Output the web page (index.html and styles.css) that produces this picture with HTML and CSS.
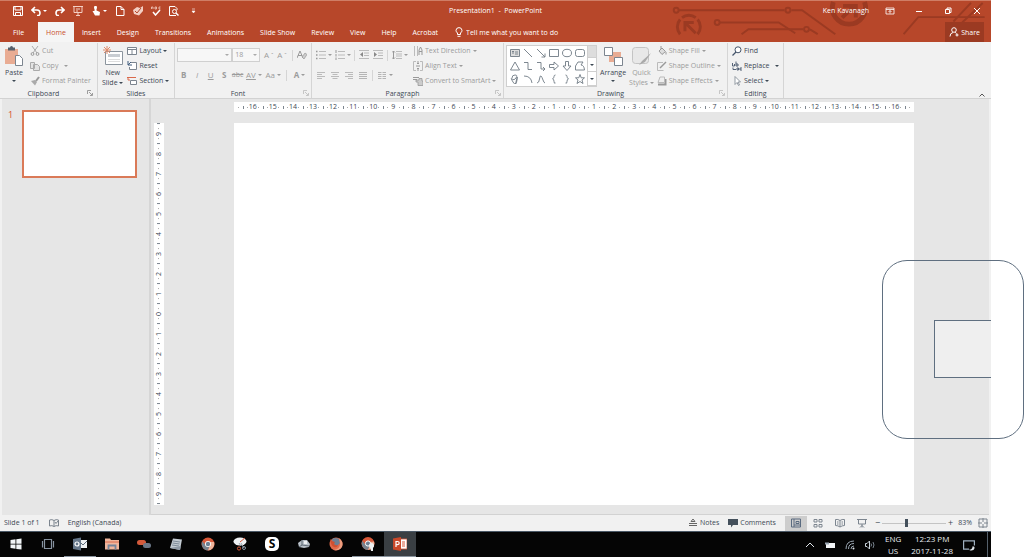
FILE: index.html
```html
<!DOCTYPE html>
<html lang="en">
<head>
  <meta charset="UTF-8" />
  <meta name="viewport" content="width=device-width, initial-scale=1" />
  <title>Presentation1 - PowerPoint</title>
  <link rel="stylesheet" href="styles.css">
</head>
<body>

<div class="window">

  <header class="header">
    <svg class="circuit" viewBox="0 0 370 42" aria-hidden="true">
      <g fill="none" stroke="#9b3a22" stroke-width="2">
        <circle cx="52" cy="9.500" r="2.500"/>
        <path d="M55 9.500H163M170 9.500H181L215 34"/>
        <circle cx="166.500" cy="9.500" r="2.500"/>
        <circle cx="94" cy="22" r="2.500"/>
        <path d="M97 22H157L174 33"/>
        <path d="M119 34L126 29H182M189 29L197 34"/>
        <circle cx="185.500" cy="29" r="2.500"/>
        <path d="M285 34L300 16.500H368M336 21L354 2M345 22L366 2"/>
        <path d="M56 34A11.500 11.500 0 0 1 56 19M58 17A11.500 11.500 0 0 1 72 17M74 19A11.500 11.500 0 0 1 74 34" stroke-width="3"/>
        <path d="M61 31V22H70M62 23L72 33" stroke-width="3"/>
        <path d="M213 1A17 17 0 1 0 245 1" stroke-width="5"/>
        <path d="M222 17L235 5M223 5H236V17" stroke-width="4"/>
      </g>
    </svg>

    <div class="titlebar">
      <div class="quick">
        <button aria-label="Save"><svg viewBox="0 0 10 10"><path d="M.500 .500h9v9h-9zM2 1v3h6V1M2.500 9.500V6.500h5v3" fill="none" stroke="#fff"/></svg></button>
        <button aria-label="Undo"><svg viewBox="0 0 10 10"><path d="M4 1L1 4l3 3M1 4h5q3 0 3 3t-3 2.500" fill="none" stroke="#fff" stroke-width="1.600"/></svg><i class="caret"></i></button>
        <button aria-label="Redo"><svg viewBox="0 0 10 10"><path d="M6 1l3 3-3 3M9 4H4Q1 4 1 7t3 2.500" fill="none" stroke="#fff" stroke-width="1.600"/></svg></button>
        <button aria-label="Start From Beginning"><svg viewBox="0 0 10 10"><path d="M0 .500h10M1 1v5.500h8V1M5 6.500V9M3 9.500h4M3 3h4M3 5h2" fill="none" stroke="#f3cfc4"/></svg></button>
        <button aria-label="Touch Mode"><svg viewBox="0 0 10 10"><path d="M3.500 0v5L1.500 5 4 9.500h4.500L9 6 5.500 4.500V0z" fill="#fff"/><circle cx="4.500" cy="1.500" r="1.500" fill="#fff"/></svg><i class="caret"></i></button>
        <button aria-label="New"><svg viewBox="0 0 10 10"><path d="M1.500 .500h4.500l3 3v6h-7.500zM6 .500v3h3" fill="none" stroke="#fff"/></svg></button>
        <button aria-label="Format"><svg viewBox="0 0 10 10"><path d="M0 4l4-3 3 1 3-2v5L6 9.500 1 8z" fill="#f3cfc4"/><path d="M2 5l2 2 4-5" fill="none" stroke="#b7472a"/></svg></button>
        <button aria-label="Spelling"><svg viewBox="0 0 10 10"><path d="M2 6l2.500 3L9 4" fill="none" stroke="#fff" stroke-width="1.500"/><path d="M.500 3V1h1.500v2M4 1v2h1.500V1zM9.500 1H8v2h1.500" fill="none" stroke="#f3cfc4" stroke-width=".8"/></svg></button>
        <button aria-label="Print Preview"><svg viewBox="0 0 10 10"><path d="M7 9.500H.500v-9H6l2 2V4" fill="none" stroke="#fff"/><circle cx="5.500" cy="5.500" r="2" fill="none" stroke="#fff"/><path d="M7 7l2.500 2.500" stroke="#fff" stroke-width="1.500"/></svg></button>
        <button aria-label="Customize Quick Access Toolbar"><svg viewBox="0 0 10 10"><path d="M5 3h3M5 5h3L6.500 7z" stroke="#fff" fill="#fff" stroke-width=".6"/></svg></button>
      </div>
      <div class="title">Presentation1&nbsp; -&nbsp; PowerPoint</div>
      <div class="controls">
        <span class="user">Ken Kavanagh</span>
        <button aria-label="Ribbon Display Options"><svg viewBox="0 0 10 10"><path d="M1 2h8v6H1zM1 3.500h8M5 7.500v-3M3.500 6L5 4.500 6.500 6" fill="none" stroke="#fff" stroke-width=".8"/></svg></button>
        <button aria-label="Minimize"><svg viewBox="0 0 10 10"><path d="M2 5.500h6" stroke="#fff"/></svg></button>
        <button aria-label="Restore Down"><svg viewBox="0 0 10 10"><path d="M2.500 3.500h4v4h-4zM4 3.500v-1.500h4v4.500H6.500" fill="none" stroke="#fff"/></svg></button>
        <button aria-label="Close"><svg viewBox="0 0 10 10"><path d="M2 2l6 6M8 2L2 8" stroke="#fff"/></svg></button>
      </div>
    </div>

    <nav class="tabs">
      <a href="#" class="file">File</a>
      <a href="#" class="active">Home</a>
      <a href="#">Insert</a>
      <a href="#">Design</a>
      <a href="#">Transitions</a>
      <a href="#">Animations</a>
      <a href="#">Slide Show</a>
      <a href="#">Review</a>
      <a href="#">View</a>
      <a href="#">Help</a>
      <a href="#">Acrobat</a>
      <label class="tell">
        <svg viewBox="0 0 10 10"><path d="M3.500 7.500V6Q2 5 2 3.300 2.200 .700 5 .600 7.800 .700 8 3.300 8 5 6.500 6V7.500zM3.500 9.300h3" fill="none" stroke="#fff"/></svg>
        <input type="text" placeholder="Tell me what you want to do">
      </label>
      <button class="share">
        <svg viewBox="0 0 10 10"><circle cx="5" cy="3" r="2.300" fill="none" stroke="#fff"/><path d="M1 9.500Q1 6 4 5.500M6 5.500q1 0 1.500 1M8 6.500v3M6.500 8h3" fill="none" stroke="#fff"/></svg>
        Share
      </button>
    </nav>
  </header>

  <section class="ribbon">
    <div class="group g-clipboard">
      <div class="group-body">
        <button class="big">
          <svg viewBox="0 0 20 20"><path d="M1 3h13v15H1z" fill="#e9ac93"/><path d="M4 1.500h7v3H4z" fill="#56606b"/><circle cx="7.500" cy="1.500" r="1.500" fill="#56606b"/><path d="M11.500 9.500h4l3 3v7h-7z" fill="#fff" stroke="#7c858f"/></svg>
          <span>Paste</span><i class="caret"></i>
        </button>
        <div class="rows off">
          <button><svg viewBox="0 0 10 10"><path d="M2 0l5 7M8 0L3 7" stroke="#aaa"/><circle cx="2.500" cy="8" r="1.400" fill="none" stroke="#999"/><circle cx="7.500" cy="8" r="1.400" fill="none" stroke="#999"/></svg>Cut</button>
          <button><svg viewBox="0 0 10 10"><path d="M.500 1.500h4v6h-4zM3.500 3.500h4l2 2v4h-6z" fill="#e3e3e3" stroke="#aaa"/></svg>Copy &nbsp;<i class="caret"></i></button>
          <button><svg viewBox="0 0 10 10"><path d="M1 5l4-1 2 2-2 3.500z" fill="#aaa"/><path d="M6 5l3-4" stroke="#999" stroke-width="2"/></svg>Format Painter</button>
        </div>
      </div>
      <div class="group-name with-launch">Clipboard<button class="launch" aria-label="Clipboard options"><svg viewBox="0 0 6 6"><path d="M.500 4V.500H4M2 2l3 3M5.500 3v2.500H3" fill="none" stroke="#888" stroke-width=".8"/></svg></button></div>
    </div>

    <div class="group g-slides">
      <div class="group-body">
        <button class="big">
          <svg viewBox="0 0 20 20"><path d="M2.500 5.500h17v13h-17z" fill="#fff" stroke="#8b949d"/><path d="M5 8h12v3H5z" fill="#c9cdd2"/><path d="M5 13.500h12M5 15.500h12" stroke="#ddd"/><path d="M4 0v8M0 4h8M1 1l6 6M7 1L1 7" stroke="#e08b6b"/></svg>
          <span>New<br>Slide <i class="caret"></i></span>
        </button>
        <div class="rows">
          <button><svg viewBox="0 0 10 10"><path d="M.500 1.500h9v7h-9zM.500 3.500h9M5 4v4" fill="#fff" stroke="#7c858f"/></svg>Layout <i class="caret"></i></button>
          <button><svg viewBox="0 0 10 10"><path d="M3 1.500h6.500v7H2.500V6" fill="#fff" stroke="#7c858f"/><path d="M1 0v4h4M1 4l3-3" fill="none" stroke="#3f5b7c"/></svg>Reset</button>
          <button><svg viewBox="0 0 10 10"><path d="M0 1.500h9M1 1v3" stroke="#d9694a" fill="none"/><path d="M3.500 4.500h6v4h-6z" fill="#fff" stroke="#7c858f"/><path d="M1 4h2" stroke="#d9694a"/></svg>Section <i class="caret"></i></button>
        </div>
      </div>
      <div class="group-name">Slides</div>
    </div>

    <div class="group g-font">
      <div class="group-body lines off">
        <div class="line">
          <span class="combo font-name"><select aria-label="Font"><option></option></select></span><span class="combo font-size"><select aria-label="Font Size"><option>18</option></select></span>
          <button class="glyph" aria-label="Increase Font Size">A<sup>ˆ</sup></button>
          <button class="glyph" aria-label="Decrease Font Size">A<sup>ˇ</sup></button>
          <i class="bar"></i>
          <button class="glyph" aria-label="Clear Formatting"><svg viewBox="0 0 10 10"><path d="M0 8L3 1l3 7M1 5.500h4" fill="none" stroke="#999"/><path d="M5 7l3-4 2 1.500L7 9z" fill="#ccc" stroke="#999" stroke-width=".7"/></svg></button>
        </div>
        <div class="line">
          <button class="glyph"><b>B</b></button>
          <button class="glyph"><em>I</em></button>
          <button class="glyph"><u>U</u></button>
          <button class="glyph"><b>S</b></button>
          <button class="glyph small"><s>abc</s></button>
          <button class="glyph wide"><u>AV</u><i class="caret"></i></button>
          <button class="glyph wide">Aa<i class="caret"></i></button>
          <i class="bar"></i>
          <button class="glyph wide"><b>A</b><i class="caret"></i></button>
        </div>
      </div>
      <div class="group-name with-launch">Font<button class="launch" aria-label="Font options"><svg viewBox="0 0 6 6"><path d="M.500 4V.500H4M2 2l3 3M5.500 3v2.500H3" fill="none" stroke="#bbb" stroke-width=".8"/></svg></button></div>
    </div>

    <div class="group g-paragraph">
      <div class="group-body off">
        <div class="lines">
          <div class="line">
            <button class="glyph wide" aria-label="Bullets"><svg viewBox="0 0 10 10"><path d="M0 1.500h1.500M0 5h1.500M0 8.500h1.500" stroke="#999" stroke-width="1.500"/><path d="M3 1.500h7M3 5h7M3 8.500h7" stroke="#bbb"/></svg><i class="caret"></i></button>
            <button class="glyph wide" aria-label="Numbering"><svg viewBox="0 0 10 10"><path d="M1 0v3M1 4v2.500M1 7.500V10" stroke="#999"/><path d="M3 1.500h7M3 5h7M3 8.500h7" stroke="#bbb"/></svg><i class="caret"></i></button>
            <i class="bar"></i>
            <button class="glyph" aria-label="Decrease List Level"><svg viewBox="0 0 10 10"><path d="M0 .500h10M5 3h5M5 5.500h5M0 8.500h10" stroke="#bbb"/><path d="M4 2L1 4.500 4 7z" fill="#888"/></svg></button>
            <button class="glyph" aria-label="Increase List Level"><svg viewBox="0 0 10 10"><path d="M0 .500h10M5 3h5M5 5.500h5M0 8.500h10" stroke="#bbb"/><path d="M1 2l3 2.500L1 7z" fill="#888"/></svg></button>
            <i class="bar"></i>
            <button class="glyph wide" aria-label="Line Spacing"><svg viewBox="0 0 10 10"><path d="M1.500 1v8M0 2.500L1.500 1 3 2.500M0 7.500L1.500 9 3 7.500" fill="none" stroke="#999"/><path d="M4 1.500h6M4 4h6M4 6h6M4 8.500h6" stroke="#bbb"/></svg><i class="caret"></i></button>
          </div>
          <div class="line">
            <button class="glyph" aria-label="Align Left"><svg viewBox="0 0 10 10"><path d="M1 2.500h8M1 4.500h5M1 6.500h8M1 8.500h5" stroke="#bbb"/></svg></button>
            <button class="glyph" aria-label="Center"><svg viewBox="0 0 10 10"><path d="M1 2.500h8M2.500 4.500h5M1 6.500h8M2.500 8.500h5" stroke="#bbb"/></svg></button>
            <button class="glyph" aria-label="Align Right"><svg viewBox="0 0 10 10"><path d="M1 2.500h8M4 4.500h5M1 6.500h8M4 8.500h5" stroke="#bbb"/></svg></button>
            <button class="glyph" aria-label="Justify"><svg viewBox="0 0 10 10"><path d="M1 2.500h8M1 4.500h8M1 6.500h8M1 8.500h8" stroke="#b5b5b5"/></svg></button>
            <i class="bar"></i>
            <button class="glyph wide" aria-label="Columns"><svg viewBox="0 0 10 10"><path d="M1 2.500h3.500M1 4.500h3.500M1 6.500h3.500M1 8.500h3.500M5.500 2.500H9M5.500 4.500H9M5.500 6.500H9M5.500 8.500H9" stroke="#b5b5b5"/></svg><i class="caret"></i></button>
          </div>
        </div>
        <div class="rows">
          <button><svg viewBox="0 0 10 10"><path d="M1.500 0v10M4.500 0v10" stroke="#bbb"/><path d="M6 9V4l1.500-3L9 4v5M6 5.500h3" fill="none" stroke="#999"/></svg>Text Direction <i class="caret"></i></button>
          <button><svg viewBox="0 0 10 10"><path d="M3 .500H.500v9H3M7 .500h2.500v9H7" fill="none" stroke="#bbb"/><path d="M5 0v3M5 7v3M3 5h4M4 2l1 1 1-1M4 8l1-1 1 1" fill="none" stroke="#999"/></svg>Align Text <i class="caret"></i></button>
          <button><svg viewBox="0 0 10 10"><path d="M0 1.500h6M0 3.500h4" stroke="#999"/><path d="M3 4h3v-1.500h3V5h1v4.500H5V6H3z" fill="#ccc" stroke="#999" stroke-width=".8"/></svg>Convert to SmartArt <i class="caret"></i></button>
        </div>
      </div>
      <div class="group-name with-launch">Paragraph<button class="launch" aria-label="Paragraph options"><svg viewBox="0 0 6 6"><path d="M.500 4V.500H4M2 2l3 3M5.500 3v2.500H3" fill="none" stroke="#bbb" stroke-width=".8"/></svg></button></div>
    </div>

    <div class="group g-drawing">
      <div class="group-body">
        <div class="gallery">
          <div class="shapes">
            <button aria-label="Text Box"><svg viewBox="0 0 10 10"><path d="M.500 1.500h9v7h-9z" fill="#ddd"/><path d="M2 3.500h2M3 3.500V6M5 4h3M5 6h3" /></svg></button>
            <button aria-label="Line"><svg viewBox="0 0 10 10"><path d="M1 1l8 8"/></svg></button>
            <button aria-label="Arrow"><svg viewBox="0 0 10 10"><path d="M1 1l8 8M9 5.500V9H5.500"/></svg></button>
            <button aria-label="Rectangle"><svg viewBox="0 0 10 10"><path d="M.500 1.500h9v7h-9z"/></svg></button>
            <button aria-label="Oval"><svg viewBox="0 0 10 10"><ellipse cx="5" cy="5" rx="4.500" ry="3.700"/></svg></button>
            <button aria-label="Rounded Rectangle"><svg viewBox="0 0 10 10"><rect x=".5" y="1.500" width="9" height="7" rx="2"/></svg></button>
            <button aria-label="Triangle"><svg viewBox="0 0 10 10"><path d="M5 1l4.500 8h-9z"/></svg></button>
            <button aria-label="Elbow Connector"><svg viewBox="0 0 10 10"><path d="M1 1.500h4v7h4"/></svg></button>
            <button aria-label="Elbow Arrow"><svg viewBox="0 0 10 10"><path d="M1 1.500h4v6.500h4M7 6l2 2-2 2"/></svg></button>
            <button aria-label="Right Arrow"><svg viewBox="0 0 10 10"><path d="M.500 3.500H5V1l4.500 4L5 9V6.500H.500z"/></svg></button>
            <button aria-label="Down Arrow"><svg viewBox="0 0 10 10"><path d="M3.500 .500V5H1l4 4.500L9 5H6.500V.500z"/></svg></button>
            <button aria-label="Freeform"><svg viewBox="0 0 10 10"><path d="M3 1h5L6 4q3 0 3.500 5h-9V5z"/></svg></button>
            <button aria-label="Scribble"><svg viewBox="0 0 10 10"><path d="M2 4q0-3 3-3t1 3-4 1 1 3 4-2-1 2-1 2"/></svg></button>
            <button aria-label="Arc"><svg viewBox="0 0 10 10"><path d="M1 2q7 0 8 7"/></svg></button>
            <button aria-label="Curve"><svg viewBox="0 0 10 10"><path d="M1 9Q3 9 3.500 5T5 2t2 4 2 3"/></svg></button>
            <button aria-label="Left Brace"><svg viewBox="0 0 10 10"><path d="M6.500 1Q5 1 5 2.500T3.500 5Q5 5 5 7.500T6.500 9"/></svg></button>
            <button aria-label="Right Brace"><svg viewBox="0 0 10 10"><path d="M3.500 1Q5 1 5 2.500T6.500 5Q5 5 5 7.500T3.500 9"/></svg></button>
            <button aria-label="Star"><svg viewBox="0 0 10 10"><path d="M5 .500l1.200 3.300h3.300L7 6l1 3.500-3-2-3 2L3 6 .500 3.800h3.300z"/></svg></button>
          </div>
          <div class="scroll">
            <button aria-label="Scroll Up" disabled></button>
            <button aria-label="Scroll Down"><i class="caret"></i></button>
            <button aria-label="More Shapes"><i class="caret"></i></button>
          </div>
        </div>
        <button class="big">
          <svg viewBox="0 0 20 20"><path d="M6 6h12v10H6z" fill="#e9ac93"/><path d="M1.500 1.500h8v8h-8zM11.500 11.500h8v8h-8z" fill="#fff" stroke="#7c858f"/></svg>
          <span>Arrange</span><i class="caret"></i>
        </button>
        <button class="big off">
          <svg viewBox="0 0 20 20"><rect x="1.500" y="1.500" width="16" height="16" rx="3" fill="#e8e8e8" stroke="#c4c4c4"/><path d="M8 19l3-4 9-8-6 9z" fill="#aaa"/></svg>
          <span>Quick<br>Styles <i class="caret"></i></span>
        </button>
        <div class="rows off">
          <button><svg viewBox="0 0 10 10"><path d="M2 5l3-3 3.500 3.500L5 8.500zM4 0v3" fill="#ddd" stroke="#999"/><path d="M9 6v2.500" stroke="#999"/></svg>Shape Fill <i class="caret"></i></button>
          <button><svg viewBox="0 0 10 10"><path d="M6 1.500H.500v8h6" fill="none" stroke="#bbb"/><path d="M3 7l6-6" stroke="#999" stroke-width="1.500"/></svg>Shape Outline <i class="caret"></i></button>
          <button><svg viewBox="0 0 10 10"><path d="M1 8.500h7.500V3" fill="none" stroke="#999" stroke-width="2"/><path d="M3 1h4.500v5.500H1z" fill="#eee" stroke="#bbb"/></svg>Shape Effects <i class="caret"></i></button>
        </div>
      </div>
      <div class="group-name with-launch">Drawing<button class="launch" aria-label="Drawing options"><svg viewBox="0 0 6 6"><path d="M.500 4V.500H4M2 2l3 3M5.500 3v2.500H3" fill="none" stroke="#bbb" stroke-width=".8"/></svg></button></div>
    </div>

    <div class="group g-editing">
      <div class="group-body">
        <div class="rows">
          <button><svg viewBox="0 0 10 10"><circle cx="6" cy="3.800" r="3" fill="#fff" stroke="#44546a"/><path d="M4 6L.500 9.500" stroke="#44546a" stroke-width="1.300"/></svg>Find</button>
          <button><svg viewBox="0 0 10 10"><path d="M.500 2v3h2V3M4 .500V5h2V3H4M1 6.500v2h3M5 7v2h1.500V7zM10 7H8v2h2" fill="none" stroke="#44546a" stroke-width=".9"/></svg>Replace &nbsp;<i class="caret"></i></button>
          <button><svg viewBox="0 0 10 10"><path d="M3 .500v8l2-2 1.500 3 1-.500L6 6h2.500z" fill="#fff" stroke="#7c858f" stroke-width=".8"/></svg>Select <i class="caret"></i></button>
        </div>
      </div>
      <div class="group-name">Editing</div>
    </div>
    <button class="collapse" aria-label="Collapse the Ribbon"><svg viewBox="0 0 6 6"><path d="M.500 4.500L3 2l2.500 2.500" fill="none" stroke="#555"/></svg></button>
  </section>

  <main class="workspace">
    <aside class="thumbs">
      <span class="thumb-no">1</span>
      <a href="#" class="thumb" aria-label="Slide 1"></a>
    </aside>
    <div class="editor">
      <div class="ruler across" id="ruler-x"></div>
      <div class="ruler down" id="ruler-y"></div>
      <div class="slide">
        <div class="shape-rounded"></div>
        <div class="shape-rect"></div>
      </div>
    </div>
  </main>

  <footer class="status">
    <span>Slide 1 of 1</span>
    <svg viewBox="0 0 10 10"><path d="M5 2.500Q3 1 .500 2v6Q3 7 5 8.500 7 7 9.500 8V2Q7 1 5 2.500v6" fill="none" stroke="#7c858f"/><path d="M6 4l1 1.500L9 3" fill="none" stroke="#7c858f"/></svg>
    <span>English (Canada)</span>
    <div class="status-right">
      <button><svg viewBox="0 0 10 10"><path d="M1 5.500h8M1 7.500h8M3 3.500h4L5 1z" fill="none" stroke="#666"/></svg>Notes</button>
      <button><svg viewBox="0 0 10 10"><path d="M0 1h10v6H5L3 9.500V7H0z" fill="#44505c"/></svg>Comments</button>
      <div class="views">
        <button class="on" aria-label="Normal"><svg viewBox="0 0 10 10"><path d="M.500 1h9v8h-9zM3 1v8M5 3.500h3v2H5zM3 7h6" fill="none" stroke="#5a6b80"/></svg></button>
        <button aria-label="Slide Sorter"><svg viewBox="0 0 10 10"><path d="M1 1.500h3v2.500H1zM6 1.500h3v2.500H6zM1 6.500h3V9H1zM6 6.500h3V9H6z" fill="none" stroke="#7c858f"/></svg></button>
        <button aria-label="Reading View"><svg viewBox="0 0 10 10"><path d="M5 2.500Q3 1 .500 1.500v6Q3 7.500 5 9 7 7.500 9.500 7.500v-6Q7 1 5 2.500V9M2 4h1.500M2 6h1.500M6.500 4H8M6.500 6H8" fill="none" stroke="#7c858f"/></svg></button>
        <button aria-label="Slide Show"><svg viewBox="0 0 10 10"><path d="M0 1.500h10M1.500 2v4h7V2M5 6v3.500M3 9.500l2-2 2 2" fill="none" stroke="#7c858f"/></svg></button>
      </div>
      <button class="step" aria-label="Zoom Out">−</button>
      <input class="zoom" type="range" min="0" max="100" value="38" aria-label="Zoom">
      <button class="step" aria-label="Zoom In">+</button>
      <span class="percent">83%</span>
      <button class="fit" aria-label="Fit slide to window"><svg viewBox="0 0 10 10"><path d="M1 1h8v8H1zM5 0v4M5 6v4M0 5h4M6 5h4" fill="none" stroke="#7c858f"/></svg></button>
    </div>
  </footer>

  <footer class="taskbar">
    <button aria-label="Start"><svg viewBox="0 0 14 14"><path d="M1.500 3L6.500 2.300V6.700H1.500zM7.300 2.200L12.500 1.500V6.700H7.300zM1.500 7.400H6.500V11.800L1.500 11zM7.300 7.400H12.500V12.600L7.300 11.900z" fill="#f2f5f7"/></svg></button>
    <button aria-label="Task View"><svg viewBox="0 0 14 14"><path d="M3.500 2.500h7v9h-7zM1.500 4v6.500M12.500 4v6.500" fill="none" stroke="#8793a0" stroke-width="1.200"/></svg></button>
    <button class="open" aria-label="Outlook"><svg viewBox="0 0 14 14"><path d="M6 3h8v8H6z" fill="#eef1f3"/><path d="M8 6l2 2 4-4" fill="none" stroke="#5d6c7b"/><path d="M0 2l8-1.500v13L0 12z" fill="#66778a"/><circle cx="4" cy="7" r="2" fill="none" stroke="#fff" stroke-width="1.200"/></svg></button>
    <button aria-label="File Explorer"><svg viewBox="0 0 14 14"><path d="M0 1.500h5l1 1.500h8v9.500H0z" fill="#efb59c"/><path d="M0 5h14" stroke="#d9694a"/><path d="M3.500 12.500v-4h7v4" fill="none" stroke="#73849a" stroke-width="1.800"/></svg></button>
    <button aria-label="Connect"><svg viewBox="0 0 14 14"><rect x="0" y="3" width="9" height="5" rx="2.500" fill="#d45a3b"/><rect x="6" y="6" width="8" height="5" rx="2.500" fill="#6a7787"/></svg></button>
    <button aria-label="Notepad"><svg viewBox="0 0 14 14"><path d="M4 1.500l9 1L11 13 1 11z" fill="#c3cbd2"/><path d="M4 4l7 1M3.500 6l7 1M3 8l7 1" stroke="#7e8b98"/><path d="M1 11l10 2 1-4" fill="#8e99a5"/></svg></button>
    <button aria-label="Chrome"><svg viewBox="0 0 14 14"><circle cx="7" cy="7" r="6.500" fill="#d9593a"/><path d="M1.200 4.500A6.500 6.500 0 0 0 7 13.500L9 8H5z" fill="#77828d"/><path d="M13 5A6.500 6.500 0 0 1 7 13.500L9.500 7 9 5z" fill="#efb59c"/><circle cx="7" cy="7" r="3" fill="#fff"/><circle cx="7" cy="7" r="2.200" fill="#6c7f93"/></svg></button>
    <button aria-label="Snipping Tool"><svg viewBox="0 0 14 14"><ellipse cx="7" cy="4.500" rx="6.500" ry="4" fill="#eef1f3"/><path d="M7 5l5-4" stroke="#d9593a"/><path d="M6 6l2 3M8 6l3 5" stroke="#9aa4ae"/><circle cx="6" cy="11.500" r="1.600" fill="none" stroke="#d9593a"/><circle cx="11" cy="11" r="1.500" fill="none" stroke="#8793a0"/></svg></button>
    <button aria-label="Skype" class="skype"><span>S</span></button>
    <button aria-label="Game"><svg viewBox="0 0 14 14"><path d="M1 6l4-3h5l3 4-1 3-5 1-5-1z" fill="#b9c1c9"/><path d="M5 3v5l-3 2M5 8l7 1" fill="none" stroke="#5f6a75"/><path d="M7 4h3v3H7z" fill="#eef1f3"/></svg></button>
    <button aria-label="Firefox"><svg viewBox="0 0 14 14"><circle cx="7" cy="7" r="6.500" fill="#e0694a"/><path d="M3 2q4-2 7 0l1 4-3 3-4-2z" fill="#6c7f93"/><path d="M10 1q5 4 3 9-3 4-8 3 6-1 6-6 0-3-1-6z" fill="#ee9d7e"/><path d="M1 2l2 2 3 1-1 2q2 2 4 1-1 3-4 2T1 2z" fill="#cf5031"/></svg></button>
    <button class="open" aria-label="Chrome Profile"><svg viewBox="0 0 14 14"><circle cx="7" cy="6.500" r="6.500" fill="#d9593a"/><path d="M1.200 4A6.500 6.500 0 0 0 7 13L9 8H5z" fill="#77828d"/><path d="M13 4.500A6.500 6.500 0 0 1 7 13L9.500 7 9 5z" fill="#efb59c"/><circle cx="7" cy="6.500" r="2.600" fill="#6c7f93" stroke="#fff"/><circle cx="10.500" cy="8.500" r="2.500" fill="#eef1f3"/><path d="M9 9h3v5H10z" fill="#eef1f3"/></svg></button>
    <button class="open current" aria-label="PowerPoint"><svg viewBox="0 0 14 14"><path d="M7 2h7v10H7z" fill="#fff" stroke="#d9593a" stroke-width=".8"/><path d="M9 5h3M9 7h3M9 9h3" stroke="#d9593a"/><path d="M0 1.500L8 0v14l-8-1.500z" fill="#c9482a"/><path d="M3 10V4.500h1.500q1.700 0 1.700 1.600T4.500 7.700H3" fill="none" stroke="#fff" stroke-width="1.200"/></svg></button>
    <div class="tray">
      <button aria-label="Show hidden icons"><svg viewBox="0 0 10 10"><path d="M1 7l4-4 4 4" fill="none" stroke="#dfe5ea"/></svg></button>
      <button aria-label="Battery"><svg viewBox="0 0 10 10"><path d="M1 3h9v5H1z" fill="#f2f5f7"/><path d="M0 2.500h4v2H0z" fill="#9aa6b2"/></svg></button>
      <button aria-label="Network"><svg viewBox="0 0 10 10"><path d="M1 9Q1 1 9 1M3.500 9q0-5.500 5.500-5.500M6 9q0-3 3-3" fill="none" stroke="#9aa6b2"/><circle cx="8.500" cy="8.500" r="1" fill="#dfe5ea"/></svg></button>
      <button aria-label="Volume"><svg viewBox="0 0 10 10"><path d="M.500 3.500H2L4.500 1v8L2 6.500H.500z" fill="none" stroke="#c9d2da"/><path d="M6 3.500q1 1.500 0 3M8 2q2 3 0 6" fill="none" stroke="#77828d"/></svg></button>
      <span class="lang">ENG<br>US</span>
      <span class="clock">12:23 PM<br>2017-11-28</span>
      <button class="notify" aria-label="Notifications"><svg viewBox="0 0 10 10"><path d="M5 8.500H.500v-7h9v4" fill="none" stroke="#9fb0c0"/><path d="M5 9q3-.500 3-3 2 0 1.500 2T6 9.500z" fill="#dfe5ea"/></svg></button>
    </div>
  </footer>
</div>

<script>
  // one cell per centimetre, counted outwards from the middle of the slide
  function drawRuler(id, max) {
    const ruler = document.getElementById(id);
    for (let n = -max - 1; n <= max + 1; n++) {
      const cell = document.createElement('span');
      cell.textContent = Math.abs(n) > max ? '' : Math.abs(n);
      ruler.appendChild(cell);
    }
  }
  drawRuler('ruler-x', 16);
  drawRuler('ruler-y', 9);
</script>

</body>
</html>
```
FILE: styles.css
```css
* {
  box-sizing: border-box;
}
body {
  margin: 0;
  padding-right: 33px;
  background: #fff;
  color: #3c4854;
  font-family: 'Open Sans', 'Noto Sans', sans-serif;
  font-size: 7px;
  line-height: 10px;
}
button, input, select {
  font: inherit;
  color: inherit;
  background: none;
  border: 0;
  padding: 0;
  margin: 0;
}
a {
  color: inherit;
  text-decoration: none;
}
svg {
  width: 10px;
  height: 10px;
  flex: none;
  display: block;
}
.caret {
  display: inline-block;
  flex: none;
  border: 2px solid transparent;
  border-top-color: currentColor;
  border-bottom: 0;
  vertical-align: middle;
}
.window {
  display: flex;
  flex-direction: column;
  height: 100vh;
}

/* title bar and tabs */
.header {
  position: relative;
  flex: none;
  background: #b7472a;
  border-top: 1px solid #cf7d66;
  color: #fff;
}
.circuit {
  position: absolute;
  top: 0;
  right: 0;
  width: 370px;
  height: 41px;
}
.titlebar {
  position: relative;
  display: grid;
  grid-template-columns: 1fr auto 1fr;
  align-items: center;
  height: 21px;
  padding-bottom: 2px;
}
.quick {
  display: flex;
  gap: 8px;
  padding-left: 13px;
}
.quick button {
  display: flex;
  align-items: center;
  gap: 2px;
}
.controls {
  display: flex;
  justify-content: flex-end;
  align-items: center;
}
.user {
  margin-right: 6px;
}
.controls button {
  display: flex;
  justify-content: center;
  width: 29px;
}
.tabs {
  position: relative;
  display: flex;
  height: 20px;
  padding-right: 7px;
  line-height: 21px;
}
.tabs a {
  padding: 0 8px;
}
.tabs .file {
  padding: 0 14px 0 13px;
}
.tabs .active {
  background: #f5f5f5;
  color: #c9502e;
}
.tell {
  display: flex;
  align-items: center;
  gap: 2px;
  padding-left: 8px;
}
.tell input {
  width: 140px;
}
.tell input::placeholder {
  color: #fff;
  opacity: 1;
}
.share {
  display: flex;
  align-items: center;
  gap: 2px;
  margin-left: auto;
  padding: 0 4px;
  background: #9b3a22;
}

/* ribbon */
.ribbon {
  display: flex;
  flex: none;
  height: 57px;
  padding-top: 1px;
  background: #f1f1f1;
  border-bottom: 1px solid #d2d2d2;
}
.group {
  display: flex;
  flex-direction: column;
  flex: none;
  border-right: 1px solid #d5d5d5;
  padding: 0 4px;
}
.g-clipboard { width: 98px; }
.g-slides { width: 77px; }
.g-font { width: 137px; padding: 0 2px; }
.g-paragraph { width: 192px; padding: 0 2px; }
.g-drawing { width: 224px; padding: 0 2px; }
.g-editing { width: 56px; }
.group-body {
  display: flex;
  gap: 4px;
  flex: 1;
}
.g-clipboard .group-body {
  gap: 6px;
}
.g-drawing .group-body {
  gap: 3px;
}
.group-name {
  display: flex;
  justify-content: center;
  position: relative;
  line-height: 9px;
}
.with-launch {
  padding-right: 10px;
}
.launch {
  position: absolute;
  right: 0;
  top: 1px;
}
.launch svg, .collapse svg {
  width: 6px;
  height: 6px;
}
.big {
  display: flex;
  flex-direction: column;
  align-items: center;
  line-height: 10px;
  white-space: nowrap;
}
.big svg {
  width: 20px;
  height: 20px;
  margin: 3px 0 2px;
}
.big .caret {
  margin-top: 2px;
}
.big span .caret {
  margin: 0;
}
.off {
  color: #9c9c9c;
}
.rows {
  display: flex;
  flex-direction: column;
  white-space: nowrap;
}
.rows button {
  display: flex;
  align-items: center;
  gap: 2px;
  height: 15px;
}
.lines {
  display: flex;
  flex-direction: column;
  gap: 6px;
  padding-top: 5px;
}
.line {
  display: flex;
  align-items: center;
  height: 14px;
}
.bar {
  width: 1px;
  height: 11px;
  margin: 0 3px;
  background: #d5d5d5;
}
.glyph {
  display: flex;
  align-items: center;
  justify-content: center;
  gap: 2px;
  width: 14px;
  font-size: 8px;
}
.glyph sup {
  font-size: 6px;
  line-height: 6px;
}
.glyph.small {
  font-size: 7px;
}
.glyph.wide {
  width: 20px;
}
.g-paragraph .wide {
  width: 19px;
}
.g-paragraph .bar {
  margin: 0 2px;
}
.combo {
  position: relative;
  display: flex;
  height: 14px;
  background: #f7f7f7;
  border: 1px solid #d0d0d0;
}
.combo::after {
  content: '';
  position: absolute;
  right: 2px;
  top: 5px;
  border: 2px solid transparent;
  border-top-color: #aaa;
  border-bottom: 0;
}
.combo select {
  width: 100%;
  padding: 0 2px;
  appearance: none;
}
.font-name {
  width: 58px;
}
.font-size {
  width: 29px;
  margin-right: 2px;
}
.gallery {
  display: flex;
  height: 42px;
  margin-top: 2px;
  border: 1px solid #cfcfcf;
  background: #fff;
}
.shapes {
  display: grid;
  grid-template-columns: repeat(6, 13px);
  align-items: center;
  justify-items: center;
  padding: 0 1px;
}
.shapes svg {
  fill: none;
  stroke: #6f7a85;
  stroke-width: 0.9;
}
.scroll {
  display: grid;
  width: 9px;
  border-left: 1px solid #cfcfcf;
}
.scroll button {
  display: flex;
  align-items: center;
  justify-content: center;
  border-bottom: 1px solid #cfcfcf;
}
.scroll button:disabled {
  background: #ddd;
}
.collapse {
  align-self: flex-end;
  margin: 0 6px 0 auto;
}

/* workspace */
.workspace {
  display: flex;
  flex: 1;
  min-height: 0;
  background: #e6e6e6;
  border: solid #f1f1f1;
  border-width: 0 2px;
}
.thumbs {
  display: flex;
  gap: 9px;
  width: 149px;
  padding: 11px 12px 0 6px;
  border-right: 2px solid #d6d6d6;
}
.thumb-no {
  color: #d8502c;
  font-size: 9px;
}
.thumb {
  flex: 1;
  height: 68px;
  background: #fff;
  border: 2px solid #da7a58;
}
.editor {
  flex: 1;
  display: grid;
  grid-template: 10px minmax(0, 1fr) / 10px 1fr;
  gap: 11px 70px;
  padding: 3px 75px 9px 3px;
  border-bottom: 1px solid #d2d2d2;
}
.ruler {
  display: flex;
  justify-content: center;
  overflow: hidden;
  background: #fff;
  line-height: 10px;
}
.ruler span {
  display: flex;
  flex: none;
  align-items: center;
  justify-content: center;
}
.across {
  grid-column: 2;
}
.across span {
  width: calc(100% / 33.867);
  background:
    linear-gradient(#7c858f, #7c858f) left center / 1px 3px no-repeat,
    linear-gradient(#aaa, #aaa) 22% center / 1px 1px no-repeat,
    linear-gradient(#aaa, #aaa) 80% center / 1px 1px no-repeat;
}
.down {
  flex-direction: column;
}
.down span {
  height: calc(100% / 19.05);
  writing-mode: vertical-rl;
  transform: rotate(180deg);
  background:
    linear-gradient(#7c858f, #7c858f) center top / 3px 1px no-repeat,
    linear-gradient(#aaa, #aaa) center 25% / 1px 1px no-repeat,
    linear-gradient(#aaa, #aaa) center 77% / 1px 1px no-repeat;
}
.slide {
  position: relative;
  background: #fff;
}
/* shapes dropped over the edge of the slide */
.shape-rounded {
  position: absolute;
  left: 648px;
  top: 137px;
  width: 142px;
  height: 179px;
  border: 1px solid #5f6f80;
  border-radius: 25px;
}
.shape-rect {
  position: absolute;
  left: 700px;
  top: 197px;
  width: 57px;
  height: 58px;
  background: #efefef;
  border: 1px solid #5f6f80;
  border-right: 0;
}

/* status bar */
.status {
  display: flex;
  flex: none;
  align-items: center;
  gap: 9px;
  height: 16px;
  padding: 0 3px 0 4px;
  background: #f1f1f1;
}
.status-right {
  display: flex;
  align-items: center;
  gap: 2px;
  margin-left: auto;
}
.status-right button {
  display: flex;
  align-items: center;
  gap: 2px;
  margin-right: 7px;
}
.status-right .views {
  display: flex;
}
.status-right .views button {
  justify-content: center;
  width: 22px;
  height: 15px;
  margin: 0;
}
.views .on {
  background: #cdcdcd;
}
.status-right .step {
  margin: 0;
  font-size: 9px;
}
.percent {
  margin: 0 4px 0 3px;
}
.status-right .fit {
  margin: 0;
}
.zoom {
  appearance: none;
  width: 64px;
  height: 10px;
  background: linear-gradient(#c4c4c4, #c4c4c4) center / 100% 1px no-repeat;
}
.zoom::-webkit-slider-thumb {
  appearance: none;
  width: 3px;
  height: 8px;
  background: #44505c;
}

/* taskbar */
.taskbar {
  display: flex;
  flex: none;
  height: 26px;
  background: #050505;
  border-top: 1px solid #4a5866;
  color: #e8edf1;
}
.taskbar > button {
  display: flex;
  align-items: center;
  justify-content: center;
  width: 32px;
  border-bottom: 1px solid transparent;
}
.taskbar > button svg {
  width: 14px;
  height: 14px;
}
.taskbar .open {
  border-bottom-color: #8a949e;
}
.taskbar .current {
  background: #3a3f43;
}
.skype span {
  width: 14px;
  height: 14px;
  border-radius: 5px;
  background: #fff;
  color: #050505;
  font-size: 12px;
  font-weight: bold;
  line-height: 14px;
}
.tray {
  display: flex;
  align-items: center;
  gap: 10px;
  margin-left: auto;
  margin-right: 3px;
  padding-right: 12px;
  border-right: 1px solid #55606b;
  font-size: 8px;
  line-height: 12px;
  text-align: center;
}
.notify svg {
  width: 12px;
  height: 12px;
}
```
